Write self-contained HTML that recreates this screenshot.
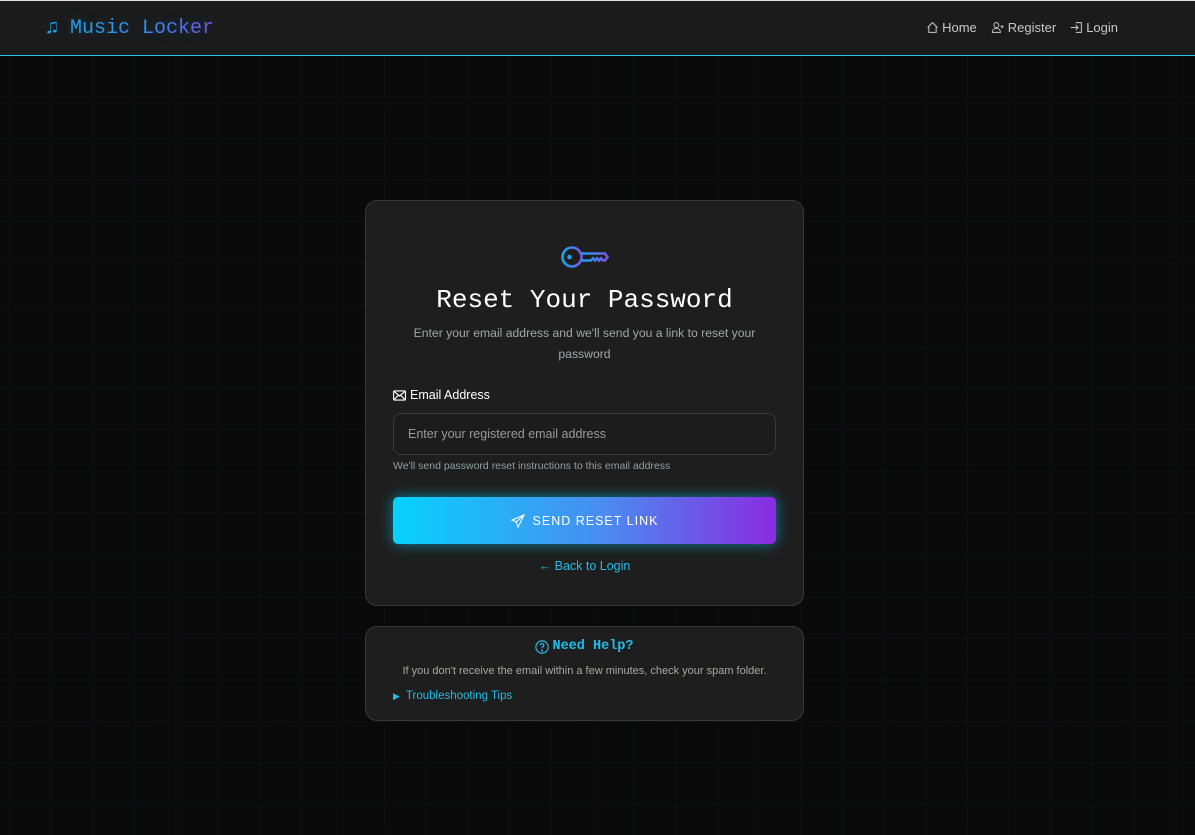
<!DOCTYPE html>
<html><head><meta charset="utf-8"><style>
*{box-sizing:border-box;margin:0;padding:0}
body{width:1195px;height:835px;overflow:hidden;background-color:#0a0a0a;
background-image:linear-gradient(90deg,rgba(0,200,220,.045) 1px,transparent 1px),linear-gradient(0deg,rgba(0,200,220,.045) 1px,transparent 1px);
background-size:41.67px 41.67px;background-position:9px 14px;font-family:"Liberation Sans",sans-serif;color:#ddd;position:relative}
.hdr{position:absolute;left:0;top:0;width:1195px;height:56px;background:#1b1b1b;border-top:1px solid #e8dede;border-bottom:1px solid #22c8e8}
.logo{position:absolute;left:46px;top:16px;font-family:"Liberation Mono",monospace;font-size:20px;background:linear-gradient(90deg,#1aa8e8,#3b8df0 60%,#7b4de8);-webkit-background-clip:text;color:transparent;text-shadow:0 0 12px rgba(0,180,255,.25)}
.nav{position:absolute;right:77px;top:19px;font-size:13px;color:#c8c8c8;display:flex;gap:14px}
.nav span{display:flex;align-items:center;gap:3px}
.card{position:absolute;left:365px;width:439px;background:#1e1e1e;border:1px solid #383838;border-radius:12px}
h1{font-family:"Liberation Mono",monospace;font-weight:normal;font-size:26px;color:#fff;text-align:center;position:absolute;left:0;right:0;top:84px}
.sub{position:absolute;left:30px;right:30px;top:122px;text-align:center;font-size:12.2px;line-height:21px;color:#a0a8a8}
.lbl{position:absolute;left:27px;top:187px;font-size:12.5px;color:#fff;display:flex;align-items:center;gap:4px}
.inp{position:absolute;left:27px;top:212px;width:383px;height:42px;border:1px solid #3a3a3a;border-radius:8px;background:#1c1c1c;font-size:12.5px;color:#9a9a9a;padding:13px 14px}
.hint{position:absolute;left:27px;top:259px;font-size:10.5px;color:#8fa0a0}
.btn{position:absolute;left:27px;top:296px;width:383px;height:47px;border-radius:5px;background:linear-gradient(90deg,#06d2fe,#4a8cf0 55%,#8a2be2);box-shadow:0 0 14px rgba(0,210,255,.55);color:#fff;font-size:12.5px;letter-spacing:1px;display:flex;align-items:center;justify-content:center;gap:8px}
.back{position:absolute;left:0;right:0;top:358px;text-align:center;font-size:12.5px;color:#22bde6}
</style></head><body>
<div class="hdr">
<div class="logo">♫ Music Locker</div>
<div class="nav">
<span><svg width="13" height="13" viewBox="0 0 16 16" fill="none" stroke="#ccc" stroke-width="1.2"><path d="M2 8 8 2l6 6M3.5 6.5V14h9V6.5"/></svg>Home</span>
<span><svg width="14" height="13" viewBox="0 0 16 16" fill="none" stroke="#ccc" stroke-width="1.2"><circle cx="6" cy="5" r="3"/><path d="M1 14c0-3 2-5 5-5s5 2 5 5zM13 5v4M11 7h4"/></svg>Register</span>
<span><svg width="13" height="13" viewBox="0 0 16 16" fill="none" stroke="#ccc" stroke-width="1.2"><path d="M7 2h7v12H7M1 8h9M7 5l3 3-3 3"/></svg>Login</span>
</div></div>

<div class="card" style="top:200px;height:406px">
<svg style="position:absolute;left:195px;top:42px" width="48" height="28" viewBox="0 0 48 28"><defs><linearGradient id="g" x1="0" x2="1"><stop offset="0" stop-color="#14a8f0"/><stop offset="1" stop-color="#7b55e8"/></linearGradient></defs><g fill="none" stroke="url(#g)" stroke-width="2.6"><circle cx="11" cy="14" r="9.5"/><path d="M20.5 10.5H44l2.5 3.5-2.5 3.5h-2l-2-2.2-2 2.2-2-2.2-2 2.2-2-2.2-2 2.2h-9.5"/></g><circle cx="8.5" cy="14" r="2.3" fill="#1ea0f0"/></svg>
<h1>Reset Your Password</h1>
<div class="sub">Enter your email address and we'll send you a link to reset your password</div>
<div class="lbl"><svg width="13" height="11" viewBox="0 0 14 11" fill="none" stroke="#fff" stroke-width="1.2"><rect x=".6" y=".6" width="12.8" height="9.8" rx="1"/><path d="M1 1l6 5 6-5M1 10l4.5-4.5M13 10 8.5 5.5"/></svg>Email Address</div>
<div class="inp">Enter your registered email address</div>
<div class="hint">We'll send password reset instructions to this email address</div>
<div class="btn"><svg width="14" height="14" viewBox="0 0 16 16" fill="none" stroke="#fff" stroke-width="1.2"><path d="M15 1 1 7l5 2 2 6zM15 1 6 9"/></svg>SEND RESET LINK</div>
<div class="back">← Back to Login</div>
</div>

<div class="card" style="top:626px;height:95px">
<div style="position:absolute;left:0;right:0;top:12px;text-align:center;font-family:'Liberation Mono',monospace;font-weight:bold;font-size:13.5px;color:#22bde6;display:flex;justify-content:center;align-items:center;gap:3px"><svg width="14" height="14" viewBox="0 0 16 16" fill="none" stroke="#22bde6" stroke-width="1.3"><circle cx="8" cy="8" r="7"/><path d="M6 6a2 2 0 1 1 2.5 2c-.5.2-.5.7-.5 1.5"/><circle cx="8" cy="12" r=".5" fill="#22bde6"/></svg>Need Help?</div>
<div style="position:absolute;left:0;right:0;top:38px;text-align:center;font-size:11px;color:#a8a8a0">If you don't receive the email within a few minutes, check your spam folder.</div>
<div style="position:absolute;left:27px;top:63px;font-size:11.5px;color:#22bde6"><span style="font-size:9px;margin-right:6px">▶</span>Troubleshooting Tips</div>
</div>
</body></html>
